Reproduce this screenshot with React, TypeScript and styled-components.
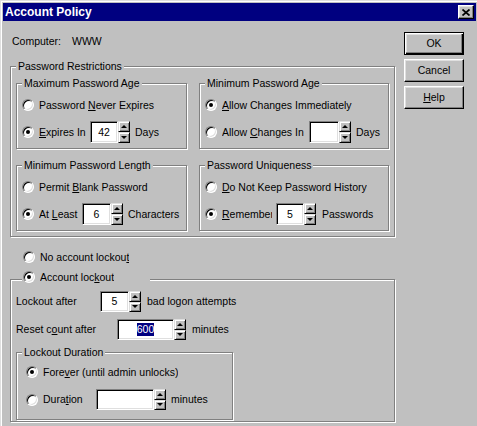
import React from 'react';
import styled, { createGlobalStyle } from 'styled-components';

const Global = createGlobalStyle`
  html, body { margin: 0; padding: 0; width: 477px; height: 426px; overflow: hidden; background: #c0c0c0; }
  body { font-family: "Liberation Sans", Arial, sans-serif; font-size: 10.5px; color: #000; }
  #root { width: 477px; height: 426px; overflow: hidden; }
`;

const Window = styled.div`
  box-sizing: border-box;
  width: 479px;
  height: 440px;
  background: #c0c0c0;
  border: 1px solid;
  border-color: #dfdfdf #000 #000 #dfdfdf;
  box-shadow: inset 1px 1px 0 #fff, inset -1px -1px 0 #808080;
  padding: 2px;
  display: flex;
  flex-direction: column;
`;

const TitleBar = styled.div`
  height: 18px;
  background: #000080;
  display: flex;
  align-items: center;
  justify-content: space-between;
  padding: 0 2px;
`;

const Title = styled.span`
  color: #fff;
  font-weight: bold;
  font-size: 12px;
  line-height: 18px;
  white-space: nowrap;
`;

const CloseButton = styled.div`
  box-sizing: border-box;
  width: 16px;
  height: 14px;
  background: #c0c0c0;
  border: 1px solid;
  border-color: #fff #000 #000 #fff;
  box-shadow: inset -1px -1px 0 #808080, inset 1px 1px 0 #dfdfdf;
  display: flex;
  align-items: center;
  justify-content: center;
`;

const Body = styled.div`
  display: grid;
  grid-template-columns: 385px 60px;
  column-gap: 9px;
  padding-left: 7px;
  align-items: start;
`;

const LeftCol = styled.div`
  display: flex;
  flex-direction: column;
  padding-top: 14px;
`;

const RightCol = styled.div`
  display: flex;
  flex-direction: column;
  gap: 4px;
  padding-top: 11px;
`;

const ComputerRow = styled.div`
  display: flex;
  height: 13px;
  line-height: 13px;
  padding-left: 2px;
`;

const FixedText = styled.span<{ $w?: number }>`
  width: ${(p) => (p.$w ? `${p.$w}px` : 'auto')};
  white-space: nowrap;
`;

const Group = styled.div<{ $h?: number; $w?: number; $pad: string; $mt?: number; $gap?: number }>`
  position: relative;
  box-sizing: border-box;
  border: 1px solid #808080;
  box-shadow: inset 1px 1px 0 #fff, 1px 1px 0 #fff;
  padding: ${(p) => p.$pad};
  margin-top: ${(p) => p.$mt ?? 0}px;
  ${(p) => (p.$h ? `height: ${p.$h}px;` : '')}
  ${(p) => (p.$w ? `width: ${p.$w}px;` : '')}
  display: flex;
  flex-direction: column;
  gap: ${(p) => p.$gap ?? 0}px;
`;

const GroupGrid = styled(Group)`
  display: grid;
  grid-template-columns: 171px 190px;
  column-gap: 12px;
  row-gap: 16px;
`;

const Legend = styled.span`
  position: absolute;
  top: -7px;
  left: 5px;
  padding: 0 2px;
  background: #c0c0c0;
  line-height: 13px;
  white-space: nowrap;
`;

const RadioLegend = styled.div`
  position: absolute;
  top: -11px;
  left: 11px;
  width: 127px;
  padding-left: 1px;
  height: 16px;
  background: #c0c0c0;
  display: flex;
  align-items: center;
`;

const Row = styled.div<{ $h?: number; $pl?: number; $mt?: number }>`
  display: flex;
  align-items: center;
  height: ${(p) => p.$h ?? 16}px;
  padding-left: ${(p) => p.$pl ?? 0}px;
  margin-top: ${(p) => p.$mt ?? 0}px;
  flex: none;
`;

const RadioDot = styled.span<{ $checked?: boolean }>`
  position: relative;
  box-sizing: border-box;
  flex: none;
  width: 12px;
  height: 12px;
  border-radius: 50%;
  background: #fff;
  border: 1px solid;
  border-color: #808080 #fff #fff #808080;
  box-shadow: inset 1px 1px 0 #000, inset -1px -1px 0 #dfdfdf;
  &::after {
    content: '';
    position: absolute;
    left: 3px;
    top: 3px;
    width: 4px;
    height: 4px;
    border-radius: 50%;
    background: #000;
    display: ${(p) => (p.$checked ? 'block' : 'none')};
  }
`;

const Label = styled.span<{ $w?: number; $mr?: number; $ml?: number }>`
  margin-left: ${(p) => p.$ml ?? 5}px;
  margin-right: ${(p) => p.$mr ?? 0}px;
  ${(p) => (p.$w ? `width: ${p.$w}px; flex: none;` : '')}
  white-space: nowrap;
  overflow: hidden;
  line-height: 13px;
`;

const Key = styled.span`
  text-decoration: underline;
`;

const SpinWrap = styled.div<{ $h: number }>`
  display: flex;
  height: ${(p) => p.$h}px;
  flex: none;
`;

const Field = styled.div<{ $w: number }>`
  box-sizing: border-box;
  width: ${(p) => p.$w}px;
  height: 100%;
  background: #fff;
  border: 1px solid;
  border-color: #808080 #fff #fff #808080;
  box-shadow: inset 1px 1px 0 #000, inset -1px -1px 0 #dfdfdf;
  display: flex;
  align-items: center;
  justify-content: center;
  line-height: 13px;
`;

const Selected = styled.span`
  background: #000080;
  color: #fff;
`;

const SpinCol = styled.div`
  display: flex;
  flex-direction: column;
  width: 12px;
  height: 100%;
`;

const SpinButton = styled.div`
  flex: 1;
  box-sizing: border-box;
  background: #c0c0c0;
  border: 1px solid;
  border-color: #dfdfdf #000 #000 #dfdfdf;
  box-shadow: inset 1px 1px 0 #fff, inset -1px -1px 0 #808080;
  display: flex;
  align-items: center;
  justify-content: center;
`;

const Arrow = styled.span<{ $down?: boolean }>`
  width: 0;
  height: 0;
  border-left: 3px solid transparent;
  border-right: 3px solid transparent;
  ${(p) => (p.$down ? 'border-top: 3px solid #000;' : 'border-bottom: 3px solid #000;')}
`;

const DialogButton = styled.div<{ $default?: boolean }>`
  box-sizing: border-box;
  width: 60px;
  height: 23px;
  background: #c0c0c0;
  display: flex;
  align-items: center;
  justify-content: center;
  line-height: 13px;
  ${(p) =>
    p.$default
      ? `border: 1px solid #000;
         box-shadow: inset 1px 1px 0 #fff, inset -1px -1px 0 #000, inset -2px -2px 0 #808080, inset 2px 2px 0 #dfdfdf;`
      : `border: 1px solid; border-color: #fff #000 #000 #fff;
         box-shadow: inset -1px -1px 0 #808080, inset 1px 1px 0 #dfdfdf;`}
`;

const Suffix = styled.span<{ $ml: number }>`
  margin-left: ${(p) => p.$ml}px;
  white-space: nowrap;
  line-height: 13px;
`;

function Spinner({ w, h = 22, children }: { w: number; h?: number; children?: React.ReactNode }) {
  return (
    <SpinWrap $h={h}>
      <Field $w={w}>{children}</Field>
      <SpinCol>
        <SpinButton>
          <Arrow />
        </SpinButton>
        <SpinButton>
          <Arrow $down />
        </SpinButton>
      </SpinCol>
    </SpinWrap>
  );
}

export default function App() {
  return (
    <>
      <Global />
      <Window>
        <TitleBar>
          <Title>Account Policy</Title>
          <CloseButton>
            <svg width="8" height="7" viewBox="0 0 8 7">
              <path d="M0.5 0.5 L7.5 6.5 M7.5 0.5 L0.5 6.5" stroke="#000" strokeWidth="1.7" />
            </svg>
          </CloseButton>
        </TitleBar>
        <Body>
          <LeftCol>
            <ComputerRow>
              <FixedText $w={60}>Computer:</FixedText>
              <FixedText>WWW</FixedText>
            </ComputerRow>

            <GroupGrid $pad="16px 5px 5px 5px" $mt={18}>
              <Legend>Password Restrictions</Legend>

              <Group $h={66} $pad="13px 0 0 5px" $gap={8}>
                <Legend>Maximum Password Age</Legend>
                <Row>
                  <RadioDot />
                  <Label>
                    Password <Key>N</Key>ever Expires
                  </Label>
                </Row>
                <Row $h={22}>
                  <RadioDot $checked />
                  <Label $w={51}>
                    <Key>E</Key>xpires In
                  </Label>
                  <Spinner w={28}>42</Spinner>
                  <Suffix $ml={5}>Days</Suffix>
                </Row>
              </Group>

              <Group $h={66} $pad="13px 0 0 5px" $gap={8}>
                <Legend>Minimum Password Age</Legend>
                <Row>
                  <RadioDot $checked />
                  <Label>
                    <Key>A</Key>llow Changes Immediately
                  </Label>
                </Row>
                <Row $h={22}>
                  <RadioDot />
                  <Label $w={87}>
                    Allow <Key>C</Key>hanges In
                  </Label>
                  <Spinner w={30} />
                  <Suffix $ml={5}>Days</Suffix>
                </Row>
              </Group>

              <Group $h={66} $pad="13px 0 0 5px" $gap={8}>
                <Legend>Minimum Password Length</Legend>
                <Row>
                  <RadioDot />
                  <Label>
                    Permit <Key>B</Key>lank Password
                  </Label>
                </Row>
                <Row $h={22}>
                  <RadioDot $checked />
                  <Label $w={43}>
                    At <Key>L</Key>east
                  </Label>
                  <Spinner w={29}>6</Spinner>
                  <Suffix $ml={5}>Characters</Suffix>
                </Row>
              </Group>

              <Group $h={66} $pad="13px 0 0 5px" $gap={8}>
                <Legend>Password Uniqueness</Legend>
                <Row>
                  <RadioDot />
                  <Label>
                    <Key>D</Key>o Not Keep Password History
                  </Label>
                </Row>
                <Row $h={22}>
                  <RadioDot $checked />
                  <Label $w={50} $mr={4}>
                    <Key>R</Key>emember
                  </Label>
                  <Spinner w={28}>5</Spinner>
                  <Suffix $ml={6}>Passwords</Suffix>
                </Row>
              </Group>
            </GroupGrid>

            <Row $pl={13} $mt={12}>
              <RadioDot />
              <Label>
                No account lockou<Key>t</Key>
              </Label>
            </Row>

            <Group $pad="11px 0 1px 5px" $mt={14}>
              <RadioLegend>
                <RadioDot $checked />
                <Label>
                  Account loc<Key>k</Key>out
                </Label>
              </RadioLegend>
              <Row $h={21}>
                <Label $w={84} $ml={0}>
                  Lockout after
                </Label>
                <Spinner w={29} h={21}>
                  5
                </Spinner>
                <Suffix $ml={6}>bad logon attempts</Suffix>
              </Row>
              <Row $h={21} $mt={7}>
                <Label $w={101} $ml={0}>
                  Reset c<Key>o</Key>unt after
                </Label>
                <Spinner w={57} h={21}>
                  <Selected>600</Selected>
                </Spinner>
                <Suffix $ml={6}>minutes</Suffix>
              </Row>
              <Group $w={217} $h={68} $pad="11px 0 0 9px" $mt={12} $gap={9}>
                <Legend>Lockout Duration</Legend>
                <Row>
                  <RadioDot $checked />
                  <Label>
                    Fore<Key>v</Key>er (until admin unlocks)
                  </Label>
                </Row>
                <Row $h={21}>
                  <RadioDot />
                  <Label $w={53}>
                    Dura<Key>t</Key>ion
                  </Label>
                  <Spinner w={58} h={21} />
                  <Suffix $ml={5}>minutes</Suffix>
                </Row>
              </Group>
            </Group>
          </LeftCol>

          <RightCol>
            <DialogButton $default>OK</DialogButton>
            <DialogButton>Cancel</DialogButton>
            <DialogButton>
              <span>
                <Key>H</Key>elp
              </span>
            </DialogButton>
          </RightCol>
        </Body>
      </Window>
    </>
  );
}
